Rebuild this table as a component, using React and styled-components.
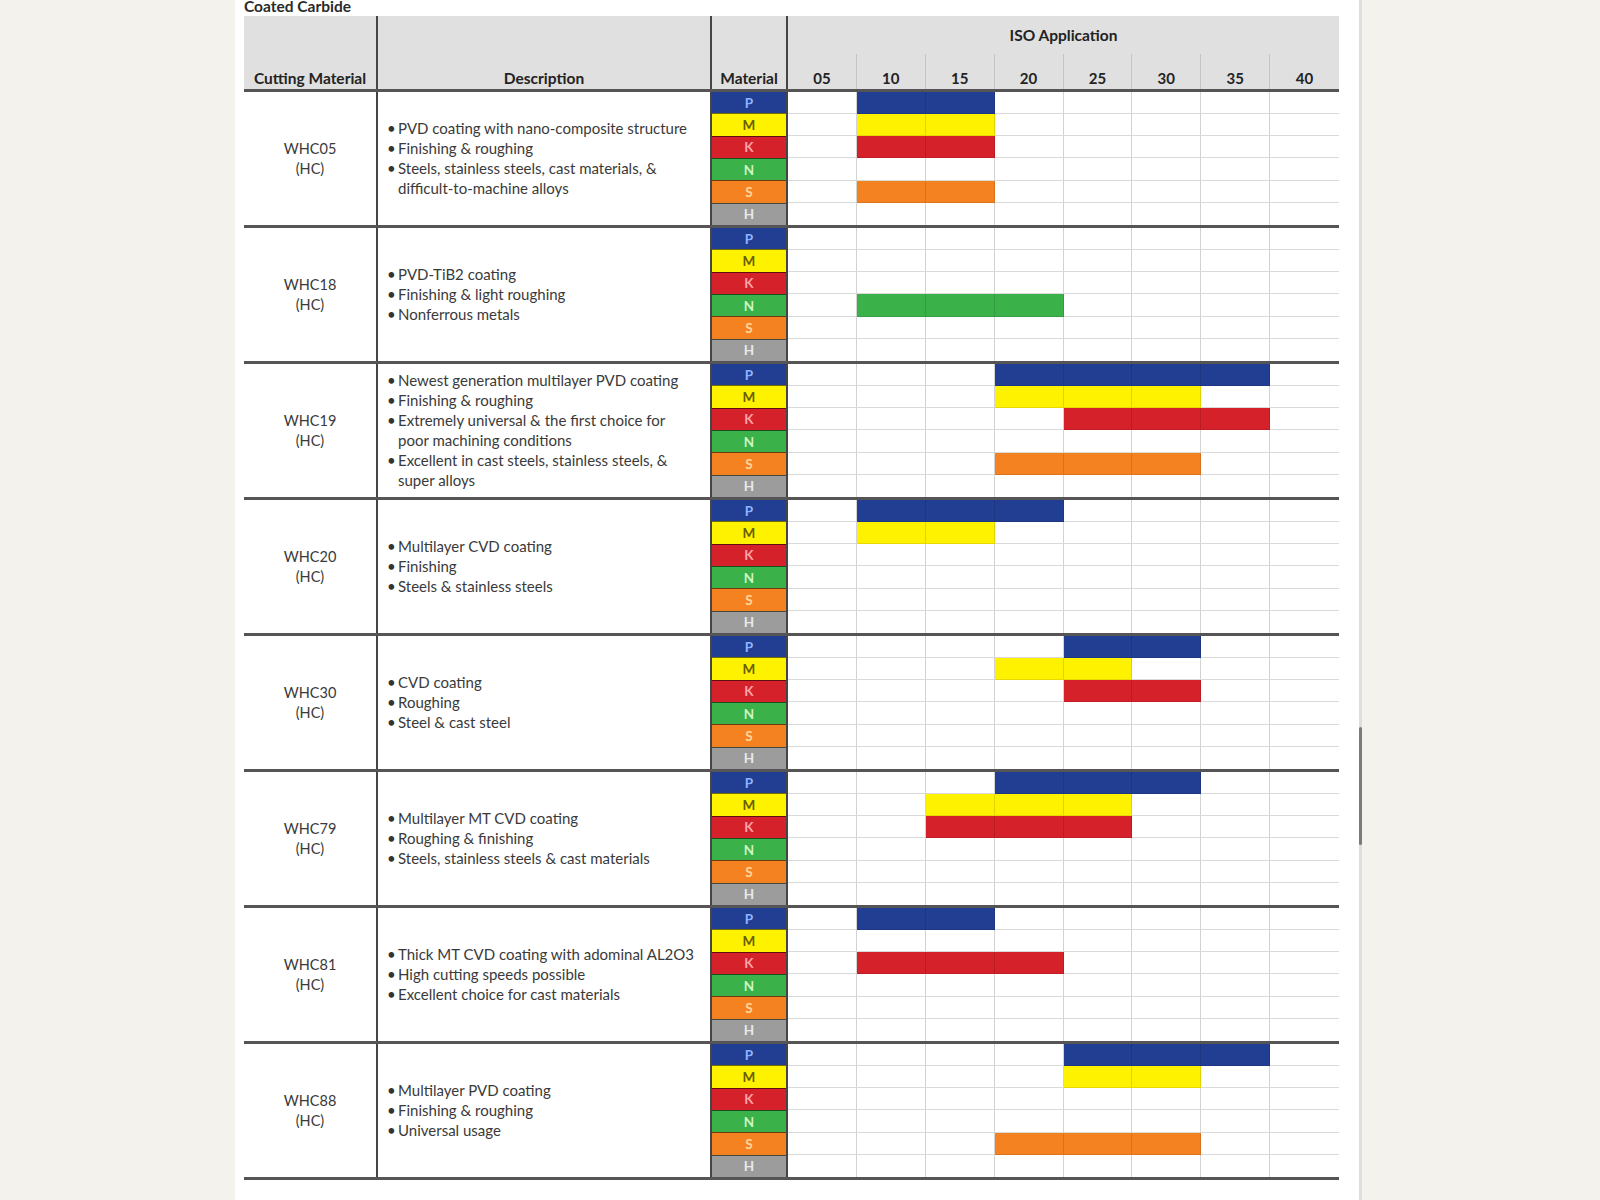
import React from 'react';
import styled, { createGlobalStyle } from 'styled-components';

const GlobalStyle = createGlobalStyle`
  html, body {
    margin: 0;
    padding: 0;
    background: #f3f2ec;
  }
  body {
    font-family: Lato, "Open Sans", "Liberation Sans", sans-serif;
    color: #333;
  }
`;

const COLORS = {
  P: { bg: '#223e92', fg: '#8db5ff' },
  M: { bg: '#fff200', fg: '#6a5c00' },
  K: { bg: '#d52129', fg: '#ffa3aa' },
  N: { bg: '#3bb14a', fg: '#c8f7c8' },
  S: { bg: '#f58220', fg: '#ffd69c' },
  H: { bg: '#9c9c9c', fg: '#e9e9e9' },
};

const MATERIALS = ['P', 'M', 'K', 'N', 'S', 'H'];
const ISO_STEPS = ['05', '10', '15', '20', '25', '30', '35', '40'];

const grades = [
  {
    code: 'WHC05',
    notes: [
      'PVD coating with nano-composite structure',
      'Finishing & roughing',
      'Steels, stainless steels, cast materials, & difficult-to-machine alloys',
    ],
    bars: { P: [1, 2], M: [1, 2], K: [1, 2], S: [1, 2] },
  },
  {
    code: 'WHC18',
    notes: ['PVD-TiB2 coating', 'Finishing & light roughing', 'Nonferrous metals'],
    bars: { N: [1, 3] },
  },
  {
    code: 'WHC19',
    notes: [
      'Newest generation multilayer PVD coating',
      'Finishing & roughing',
      'Extremely universal & the first choice for poor machining conditions',
      'Excellent in cast steels, stainless steels, & super alloys',
    ],
    bars: { P: [3, 6], M: [3, 5], K: [4, 6], S: [3, 5] },
  },
  {
    code: 'WHC20',
    notes: ['Multilayer CVD coating', 'Finishing', 'Steels & stainless steels'],
    bars: { P: [1, 3], M: [1, 2] },
  },
  {
    code: 'WHC30',
    notes: ['CVD coating', 'Roughing', 'Steel & cast steel'],
    bars: { P: [4, 5], M: [3, 4], K: [4, 5] },
  },
  {
    code: 'WHC79',
    notes: ['Multilayer MT CVD coating', 'Roughing & finishing', 'Steels, stainless steels & cast materials'],
    bars: { P: [3, 5], M: [2, 4], K: [2, 4] },
  },
  {
    code: 'WHC81',
    notes: [
      'Thick MT CVD coating with adominal AL2O3',
      'High cutting speeds possible',
      'Excellent choice for cast materials',
    ],
    bars: { P: [1, 2], K: [1, 3] },
  },
  {
    code: 'WHC88',
    notes: ['Multilayer PVD coating', 'Finishing & roughing', 'Universal usage'],
    bars: { P: [4, 6], M: [4, 5], S: [3, 5] },
  },
];

const Page = styled.div`
  display: flex;
  min-height: 100vh;
`;

const Sheet = styled.div`
  margin-left: 235px;
  width: 1127px;
  min-height: 1200px;
  background: #ffffff;
  display: flex;
`;

const SheetBody = styled.div`
  flex: 1;
  padding-left: 9px;
`;

const ScrollTrack = styled.div`
  width: 3px;
  background: #dedede;
  padding-top: 727px;
`;

const ScrollThumb = styled.div`
  height: 118px;
  background: #7b7b7b;
  border-radius: 2px;
`;

const Title = styled.div`
  font-weight: 700;
  font-size: 15.5px;
  line-height: 12px;
  height: 16px;
  color: #2a2a2a;
`;

const Table = styled.div`
  width: 1095px;
`;

const COLS = '134px 334px 76px 551px';

const HeaderRow = styled.div`
  display: grid;
  grid-template-columns: ${COLS};
  height: 73px;
  border-bottom: 3px solid #555;
`;

const HeadCell = styled.div`
  background: #e0e0e0;
  display: flex;
  align-items: flex-end;
  justify-content: center;
  padding-bottom: 2px;
  font-weight: 700;
  font-size: 15.5px;
  color: #232323;
  border-right: 2px solid #454545;
`;

const IsoHead = styled.div`
  background: #e0e0e0;
  display: flex;
  flex-direction: column;
`;

const IsoTitle = styled.div`
  height: 38px;
  display: flex;
  align-items: center;
  justify-content: center;
  font-weight: 700;
  font-size: 15.5px;
  color: #232323;
`;

const IsoSteps = styled.div`
  flex: 1;
  display: grid;
  grid-template-columns: repeat(8, 1fr);
`;

const StepCell = styled.div`
  display: flex;
  align-items: flex-end;
  justify-content: center;
  padding-bottom: 2px;
  font-weight: 700;
  font-size: 15px;
  color: #232323;
  border-right: ${(p) => (p.$last ? 'none' : '1px solid #c4c4c4')};
`;

const Group = styled.div`
  display: grid;
  grid-template-columns: ${COLS};
  height: 133px;
  border-bottom: 3px solid #555;
`;

const CodeCell = styled.div`
  display: flex;
  flex-direction: column;
  align-items: center;
  justify-content: center;
  font-size: 14.5px;
  line-height: 20px;
  color: #3a3a3a;
  border-right: 2px solid #454545;
`;

const NotesCell = styled.ul`
  margin: 0;
  padding: 0 14px 2px 9px;
  list-style: none;
  display: flex;
  flex-direction: column;
  justify-content: center;
  border-right: 2px solid #454545;
`;

const Note = styled.li`
  position: relative;
  padding-left: 11px;
  font-size: 15px;
  line-height: 20px;
  color: #3a3a3a;

  &::before {
    content: '•';
    position: absolute;
    left: 0;
    top: 0;
    color: #333;
  }
`;

const MaterialStack = styled.div`
  display: flex;
  flex-direction: column;
  border-right: 2px solid #454545;
`;

const MaterialCell = styled.div`
  flex: 1;
  display: flex;
  align-items: center;
  justify-content: center;
  font-size: 13.5px;
  font-weight: 700;
  background: ${(p) => COLORS[p.$m].bg};
  color: ${(p) => COLORS[p.$m].fg};
  border-top: ${(p) => (p.$first ? 'none' : '1px solid rgba(0,0,0,0.55)')};
`;

const IsoGrid = styled.div`
  display: grid;
  grid-template-rows: repeat(6, 1fr);
`;

const IsoRow = styled.div`
  display: grid;
  grid-template-columns: repeat(8, 1fr);
`;

const IsoCell = styled.div`
  background: ${(p) => (p.$fill ? COLORS[p.$fill].bg : '#ffffff')};
  border-right: ${(p) => (p.$lastCol ? 'none' : `1px solid ${p.$fill ? 'rgba(0,0,0,0.12)' : '#d3d3d3'}`)};
  border-bottom: ${(p) => (p.$lastRow ? 'none' : `1px solid ${p.$fill ? 'rgba(0,0,0,0.1)' : '#dadada'}`)};
`;

const GradeBlock = ({ grade }) => (
  <Group>
    <CodeCell>
      <span>{grade.code}</span>
      <span>(HC)</span>
    </CodeCell>
    <NotesCell>
      {grade.notes.map((n) => (
        <Note key={n}>{n}</Note>
      ))}
    </NotesCell>
    <MaterialStack>
      {MATERIALS.map((m, i) => (
        <MaterialCell key={m} $m={m} $first={i === 0}>
          {m}
        </MaterialCell>
      ))}
    </MaterialStack>
    <IsoGrid>
      {MATERIALS.map((m, r) => {
        const bar = grade.bars[m];
        return (
          <IsoRow key={m}>
            {ISO_STEPS.map((s, c) => (
              <IsoCell
                key={s}
                $fill={bar && c >= bar[0] && c <= bar[1] ? m : null}
                $lastCol={c === ISO_STEPS.length - 1}
                $lastRow={r === MATERIALS.length - 1}
              />
            ))}
          </IsoRow>
        );
      })}
    </IsoGrid>
  </Group>
);

export default function App() {
  return (
    <Page>
      <GlobalStyle />
      <Sheet>
        <SheetBody>
          <Title>Coated Carbide</Title>
          <Table>
            <HeaderRow>
              <HeadCell>Cutting Material</HeadCell>
              <HeadCell>Description</HeadCell>
              <HeadCell>Material</HeadCell>
              <IsoHead>
                <IsoTitle>ISO Application</IsoTitle>
                <IsoSteps>
                  {ISO_STEPS.map((s, i) => (
                    <StepCell key={s} $last={i === ISO_STEPS.length - 1}>
                      {s}
                    </StepCell>
                  ))}
                </IsoSteps>
              </IsoHead>
            </HeaderRow>
            {grades.map((g) => (
              <GradeBlock key={g.code} grade={g} />
            ))}
          </Table>
        </SheetBody>
        <ScrollTrack>
          <ScrollThumb />
        </ScrollTrack>
      </Sheet>
    </Page>
  );
}
